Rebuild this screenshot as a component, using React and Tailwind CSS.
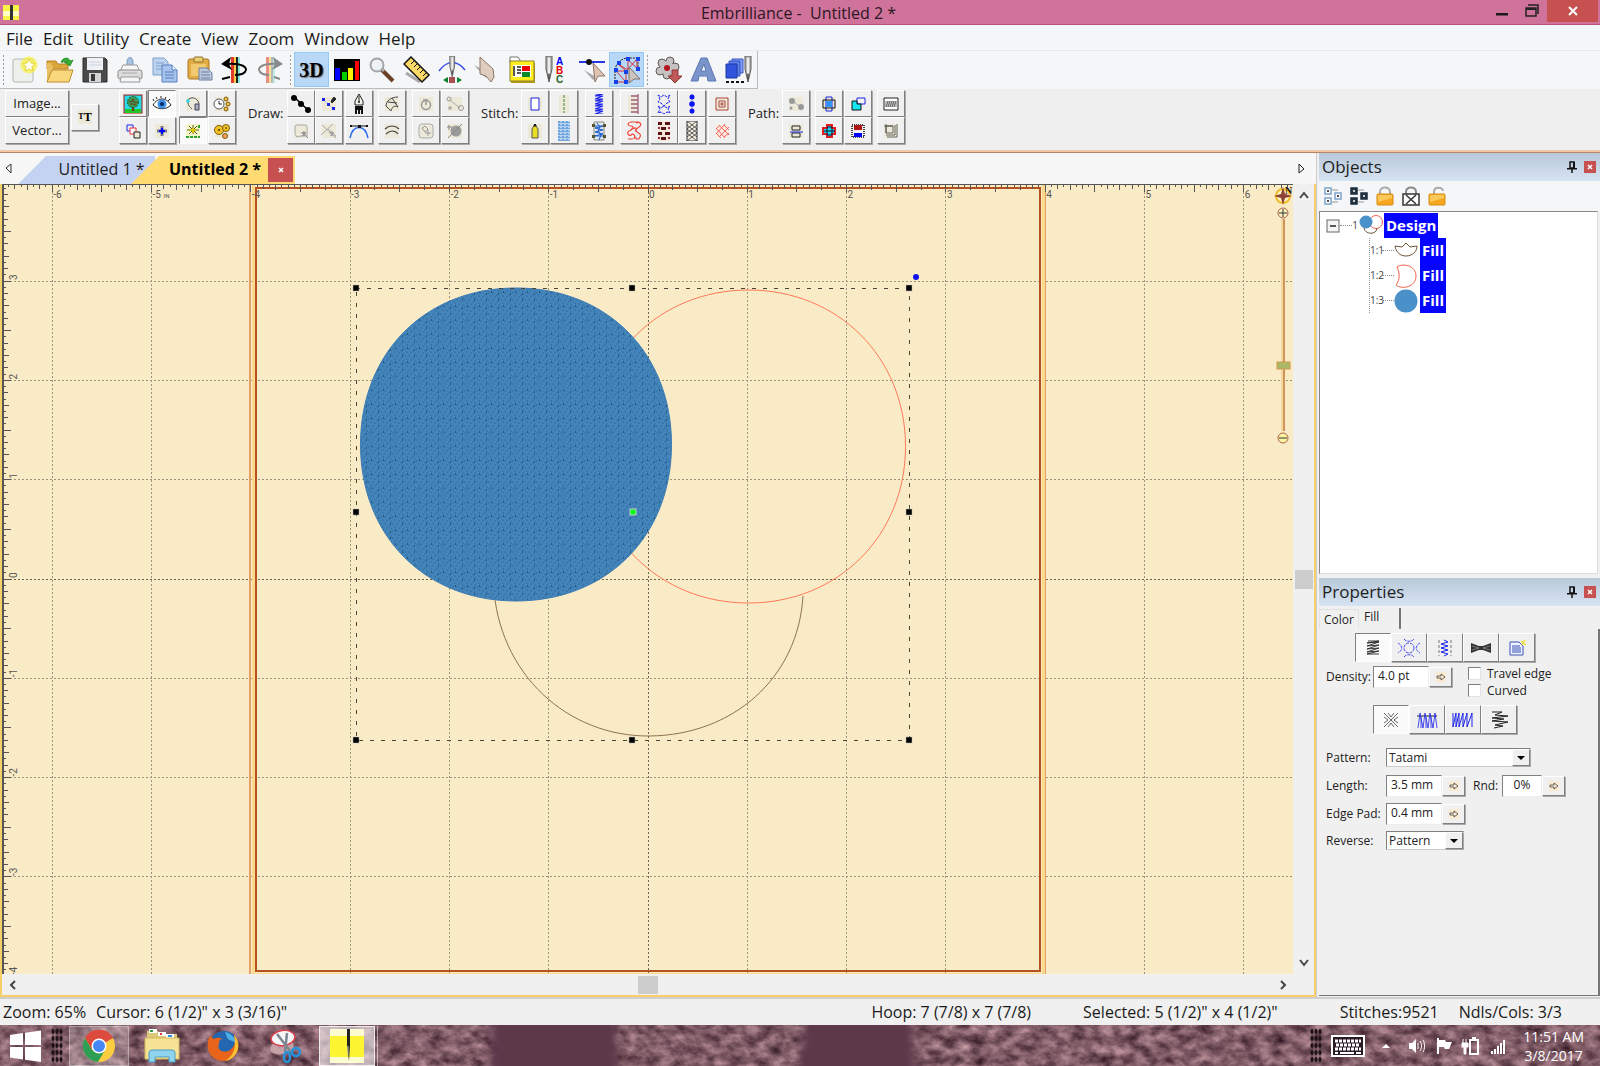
import { useState } from "react";

const INCH = 99.3;

const Ico = ({ s = 28, children, className = "" }) => (
    <svg width={s} height={s} viewBox={`0 0 ${s} ${s}`} fill="none" className={`shrink-0 ${className}`} aria-hidden="true">
        {children}
    </svg>
);

/* ---------- main toolbar icons, 28 x 28 ---------- */

const Thread = ({ faded }) => (
    <g opacity={faded ? 0.55 : 1}>
        <path d="M10 1h3v26h-3z" fill="#e23b2a" />
        <path d="M13 1h2v26h-2z" fill="#f5d04a" />
        <path d="M15 1h2v26h-2z" fill={faded ? "#888" : "#222"} />
        <path d="M17 1h2v26h-2z" fill="#8fe6dc" />
    </g>
);

const fileTools = [
    ["New", <Ico><rect x="2" y="3" width="20" height="23" rx="2" fill="#eef0ec" stroke="#b4b8b0" /><circle cx="18" cy="9" r="8.500" fill="#f7f04a" opacity=".75" /><path d="M18 3l2 4 4 .6-3 3 .8 4.400-3.800-2-3.800 2 .8-4.400-3-3 4-.6z" fill="#fffef0" stroke="#e3d63c" /></Ico>],
    ["Open", <Ico><path d="M1 5h9l2 3h10v5H1z" fill="#dba63c" stroke="#b98324" /><path d="M1 26V7h4l3 8z" fill="#eabf62" /><path d="M1 26l5-12h21l-4 12z" fill="#f9d77c" stroke="#c08a2c" /><path d="M15 6c2-5 8-5 9-1l3-1-3 6-6-4 3-.5c-1-1-3-1-4 1z" fill="#35ad35" stroke="#1d7f1d" strokeWidth=".7" /></Ico>],
    ["Save", <Ico><path d="M2 2h22l2 2v22H2z" fill="#4b4b4b" stroke="#2c2c2c" /><rect x="6" y="2" width="16" height="12" fill="#eef1f5" /><path d="M8 6h12M8 9h12" stroke="#cdd3da" /><rect x="8" y="17" width="12" height="9" fill="#d5d5d5" /><rect x="10" y="18" width="4" height="7" fill="#3a3a3a" /></Ico>],
    ["Print", <Ico><path d="M11 6c0-6 6-6 6 0v6h-6z" fill="#a8c2e2" stroke="#7d9cc4" /><path d="M7 9h14l3 7H4z" fill="#f6f6f6" stroke="#999" /><rect x="2" y="14" width="24" height="9" rx="2" fill="#dcdcdc" stroke="#8b8b8b" /><path d="M5 21h18l1 5H4z" fill="#f5f5f5" stroke="#999" /><path d="M6 17h15" stroke="#aaa" /></Ico>],
    ["Copy", <Ico><path d="M2 2h11l4 4v13H2z" fill="#bcd3ef" stroke="#7f9fcd" /><path d="M5 7h8M5 10h8M5 13h8" stroke="#7f9fcd" /><path d="M11 9h10l5 5v12H11z" fill="#a5c3ec" stroke="#587fbd" /><path d="M21 9v5h5" fill="#e4eefb" stroke="#587fbd" /><path d="M14 16h9M14 19h9M14 22h9" stroke="#587fbd" /></Ico>],
    ["Paste", <Ico><rect x="2" y="3" width="21" height="20" rx="2" fill="#e2ac45" stroke="#a9772a" /><rect x="8" y="1" width="9" height="5" rx="1" fill="#e9cf6f" stroke="#8a7130" /><path d="M5 8h15v12H5z" fill="#f2c96f" /><path d="M13 12h8l5 5v7H13z" fill="#bcc9dc" stroke="#6c7f9f" /><path d="M15 16h8M15 19h9M15 22h9" stroke="#6c7f9f" /></Ico>],
    ["Undo", <Ico><Thread /><path d="M6 8c14-1 22 3 18 8-2 2-5 3-10 3" stroke="#000" strokeWidth="2" /><path d="M0 8l10-7-2 7 3 6z" fill="#000" /><path d="M1 23l8-2" stroke="#000" strokeWidth="2" /></Ico>],
    ["Redo", <Ico><Thread faded /><path d="M22 8C8 7 0 11 4 16c2 2 5 3 9 3" stroke="#888" strokeWidth="2" /><path d="M27 8L17 1l2 7-3 6z" fill="#888" /><path d="M18 21l6 2" stroke="#888" strokeWidth="2" /></Ico>],
];

const Needle = ({ x = 14 }) => (
    <g transform={`translate(${x - 14} 0)`}>
        <path d="M11 0h6v13l-3 13-3-13z" fill="#b9bab8" stroke="#5a5a5a" />
        <path d="M14 2v15" stroke="#eee" strokeWidth="2" />
        <path d="M14 18v5" stroke="#222" />
    </g>
);

const viewTools = [
    ["3D", <span className="font-['Liberation_Serif',serif] text-[20px] font-bold text-black [text-shadow:1px_1px_1px_#777]">3D</span>],
    ["Color sort", <Ico><path d="M1 3h26v22H1z" fill="#000" /><path d="M2 12h5v12H2z" fill="#00f" /><path d="M9 16h5v8H9z" fill="#0c0" /><path d="M15 12h5v12h-5z" fill="#fe0" /><path d="M22 5h4v19h-4z" fill="#f00" /></Ico>],
    ["Magnify", <Ico><path d="M13 13l12 12" stroke="#6d4128" strokeWidth="4" /><path d="M13 12l3 3" stroke="#aaa" strokeWidth="3" /><circle cx="9" cy="9" r="6.500" fill="#eef2f4" stroke="#a3a6a8" strokeWidth="2" /></Ico>],
    ["Measure", <Ico><path d="M3 17l14 9" stroke="#aaa" strokeWidth="3" /><path d="M8 1l18 18-7 7L1 8z" fill="#fbd968" stroke="#111" strokeWidth="1.500" /><path d="M8 8l3-3M11 11l3-3M14 14l3-3M17 17l3-3M20 20l3-3" stroke="#111" /></Ico>],
    ["Stitch simulator", <Ico><path d="M1 15c8-11 18-11 26-1" stroke="#3a4fe0" strokeWidth="1.500" /><g transform="translate(3 0) scale(.8)"><Needle /></g><path d="M10 21l-5 3 5 3z" fill="#0a7f2e" /><path d="M19 21l5 3-5 3z" fill="#0a7f2e" /><path d="M12 21v6M14 21v6M16 21v6" stroke="#8a1717" strokeWidth="1.500" /></Ico>],
    ["Select", <Ico><path d="M1 9l12 13 3-5z" fill="#aaa" /><path d="M7 1v17l6 2 5 6 3-5-1-8z" fill="#dfcdbf" stroke="#8c7567" /></Ico>],
    ["Thread list", <Ico><path d="M3 7h24v20H3z" fill="#b59b1a" /><path d="M2 1h8l2 3v3H2z" fill="#fff" stroke="#777" /><rect x="2" y="5" width="24" height="20" fill="#ffee1c" stroke="#8b8030" /><rect x="5" y="9" width="18" height="12" fill="#fff" /><path d="M6 10v10M9 11h4M9 14h4M9 17h4" stroke="#222" strokeWidth="1.500" /><path d="M14 10h8v5h-8z" fill="#e00" /><path d="M14 16h8v5h-8z" fill="#0a8a2a" /></Ico>],
    ["Lettering", <Ico><Needle x={6} /><g className="font-['Liberation_Sans',sans-serif] text-[10px] font-bold"><text x="13" y="9" fill="#00f">A</text><text x="13" y="18" fill="#e00">B</text><text x="13" y="27" fill="#27641f">C</text></g></Ico>],
    ["Edit points", <Ico><path d="M6 14l9 10 3-3z" fill="#aaa" /><path d="M15 7l12 13-7 0-3 6z" fill="#dfc3b3" stroke="#8c7567" /><path d="M1 6h26" stroke="#2438e0" strokeWidth="2" /><circle cx="11" cy="6" r="3" fill="#111" /></Ico>],
    ["Edit stitches", <Ico><path d="M2 26V14C3 7 8 3 14 2h11v11" stroke="#222" strokeDasharray="2 1" /><path d="M3 26h10L3 15h10L5 8l10 6V4l9 8V3l-9 10M13 16v10" stroke="#c33" /><path d="M16 11l11 12-6 0-5 4z" fill="#cfc4bd" stroke="#7b6f69" /><g fill="#1540ee"><path d="M1 12h4v4H1zM1 24h4v4H1zM11 24h4v4h-4zM11 14h4v4h-4zM13 1h4v4h-4zM23 1h4v4h-4zM23 11h4v4h-4zM4 5h4v4H4z" /></g></Ico>],
];

const extraTools = [
    ["Import", <Ico><g fill="#c6c2c2" stroke="#5f5a5a"><circle cx="7" cy="7" r="4" /><circle cx="15" cy="5" r="4" /><circle cx="20" cy="11" r="4" /><circle cx="5" cy="15" r="4" /><circle cx="12" cy="19" r="4" /></g><circle cx="12" cy="12" r="7" fill="#c6c2c2" /><circle cx="12" cy="12" r="3" fill="#b3161c" /><path d="M17 14h6v6h4l-7 7-7-7h4z" fill="#c05a58" stroke="#8f3838" /></Ico>],
    ["Text", <Ico><path d="M1 25L11 2h6l9 23h-8l-1-5H9l-1 5zM11 15h5l-2-7z" fill="#7b95cc" stroke="#5c77b3" fillRule="evenodd" /></Ico>],
    ["Stitch out", <Ico><path d="M7 3h11v14H7z" fill="#7ea2f3" stroke="#3852c4" /><path d="M4 5h11v15H4z" fill="#5a7de8" stroke="#3852c4" /><path d="M1 8h11v14H1z" fill="#3154dd" stroke="#2038a0" /><g transform="translate(9 0)"><Needle /></g><path d="M1 26h19" stroke="#111" strokeWidth="2" strokeDasharray="3 2" /></Ico>],
];

/* ---------- drawing toolbar icons, 20 x 20 ---------- */

const Pad = () => <rect x="3" y="3" width="14" height="14" fill="#ece9d8" />;
const B = "#1a22e8";

const drawColumns = [
    {
        gap: "ml-5",
        items: [
            ["Background", <Ico s={20}><rect x="1" y="1" width="18" height="18" fill="#25d9e6" stroke="#a01515" /><path d="M2 15h16v4H2z" fill="#25c32a" /><path d="M9 10h2v7H9z" fill="#6a3c12" /><circle cx="10" cy="8" r="5.500" fill="#3b9a5a" stroke="#1d5b1a" strokeDasharray="2 1" /><path d="M6 7l3 1 1-3 2 4 3-1M7 10l3 0 3 1" stroke="#6a3c12" /></Ico>],
            ["Objects view", <Ico s={20}><path d="M4 4h6v6H4z" stroke={B} /><path d="M7 7h6v6H7z" fill="#fff" stroke="#e33" /><path d="M11 11h6v6h-6z" fill="#ece9d8" stroke="#222" /></Ico>],
        ],
    },
    {
        gap: "ml-px",
        items: [
            ["Show stitches", <Ico s={20}><path d="M1 11c5-8 13-8 18 0-5 5-13 5-18 0z" fill="#fff" stroke="#222" /><circle cx="10" cy="10" r="4.500" fill="#3f8fe6" /><circle cx="10" cy="10" r="2" fill="#062a66" /><path d="M2 7l-1-2M5 5L4 3M9 4V2M13 5l1-2M16 7l2-2" stroke="#222" /></Ico>, true],
            ["Center", <Ico s={20}><Pad /><path d="M10 5v10M5 10h10" stroke="#778" strokeWidth="3" /><path d="M10 7v6M7 10h6" stroke="#00f" strokeWidth="2" /></Ico>],
        ],
    },
    {
        gap: "ml-[3px]",
        items: [
            ["Node path", <Ico s={20}><Pad /><path d="M4 7c3-5 11-4 12 3M5 8c0 4 2 5 4 7" stroke="#555" /><circle cx="5" cy="7" r="1.800" fill="#25d9e6" /><path d="M12 10h4v6h-4z" fill="#aab" stroke="#446" /></Ico>],
            ["Grid snap", <Ico s={20}><path d="M3 3h14v14H3z" fill="#f4f8c8" /><path d="M10 4v9M4 9h12M6 5l8 8M14 5l-8 8" stroke="#5a5a18" /><path d="M10 7v5M7 9h6" stroke="#dcc60a" strokeWidth="2" /><path d="M3 16h14M16 4v3" stroke="#2aa52a" strokeWidth="2" strokeDasharray="3 1" /></Ico>, true],
        ],
    },
    {
        gap: "ml-px",
        items: [
            ["Clock", <Ico s={20}><Pad /><circle cx="7" cy="10" r="5" fill="#fff" stroke="#555" /><path d="M7 7v3h3" stroke="#222" /><g fill="#f1c33a" stroke="#7b5a10"><circle cx="14" cy="5" r="2" /><circle cx="16" cy="10" r="2" /><circle cx="14" cy="15" r="2" /></g></Ico>],
            ["Gears", <Ico s={20}><Pad /><g fill="#f2c322" stroke="#7b5a10"><circle cx="7" cy="9" r="4.500" /><circle cx="14" cy="7" r="3.500" /><circle cx="13" cy="15" r="2.500" fill="#f3a45a" /></g><circle cx="7" cy="9" r="1.300" fill="#7b5a10" /><circle cx="14" cy="7" r="1" fill="#7b5a10" /></Ico>],
        ],
    },
    { label: "Draw:", width: "w-[51px]" },
    {
        items: [
            ["Points", <Ico s={20}><path d="M3 3l14 13" stroke="#000" strokeWidth="1.500" /><g fill="#000"><circle cx="3" cy="4" r="3" /><circle cx="10" cy="10" r="3" /><circle cx="17" cy="16" r="3" /></g></Ico>],
            ["Wand area", <Ico s={20}><Pad /><path d="M6 4h8q2 0 2 2v9h-6l-4 1-2-3V6q0-2 2-2z" stroke="#aaa" /><path d="M11 11l6 6M11 15l4-3M10 12h5M13 10v5" stroke="#888" /></Ico>],
        ],
    },
    {
        items: [
            ["Pencil line", <Ico s={20}><Pad /><path d="M4 5l5 5 6 6" stroke="#b9b9e0" /><path d="M3 4h3v3H3zM8 9h3v3H8zM13 13h3v3h-3z" fill={B} /><path d="M12 7l3-4 2 2-4 4z" fill="#222" stroke="#222" /></Ico>],
            ["Wand cut", <Ico s={20}><Pad /><path d="M2 14L14 3M3 4l13 12M9 8l8 7" stroke="#aaa" /><path d="M11 11l6 6M11 15l4-3M10 12h5M13 10v5" stroke="#999" /></Ico>],
        ],
    },
    {
        gap: "ml-0.5",
        items: [
            ["Pen", <Ico s={20}><path d="M10 0l4 7v4H6V7z" fill="#f4f4ee" stroke="#222" /><path d="M10 2v6" stroke="#222" /><circle cx="10" cy="8" r="1" fill="#222" /><path d="M6 12h8v8h-2v-4h-1v4H9v-4H8v4H6z" fill="#111" /></Ico>],
            ["Curve", <Ico s={20}><path d="M2 5h16" stroke="#111" /><path d="M1 17C4 3 16 3 19 17" stroke="#2a6cf0" strokeWidth="1.500" /><path d="M1 4h2v2H1zM9 4h3v3H9zM17 4h2v2h-2z" fill="#111" /></Ico>],
        ],
    },
    {
        gap: "ml-[5px]",
        items: [
            ["Satin column", <Ico s={20}><Pad /><path d="M16 3C9 3 4 7 4 12M16 13c-4-2-6 0-7 4M10 4l6 9M6 8l9 1M4 12l5 5" stroke="#444" /></Ico>],
            ["Satin arc", <Ico s={20}><Pad /><path d="M3 8c4-4 10-4 14 0M4 13c4-4 9-4 12 0" stroke="#444" strokeWidth="1.200" /></Ico>],
        ],
    },
    {
        gap: "ml-1.5",
        items: [
            ["Apple", <Ico s={20}><Pad /><circle cx="10" cy="11" r="4.500" stroke="#999" strokeWidth="1.500" /><path d="M10 11V5M7 6h5" stroke="#999" strokeWidth="1.500" /></Ico>],
            ["Tag", <Ico s={20}><Pad /><rect x="3" y="3" width="14" height="14" rx="3" stroke="#aaa" /><path d="M6 7l3-2 3 3-3 3zM12 9v6M9 12h6" stroke="#999" /></Ico>],
        ],
    },
    {
        gap: "ml-px",
        items: [
            ["Join", <Ico s={20}><Pad /><path d="M5 6l10 8" stroke="#aaa" /><circle cx="4" cy="5" r="2" stroke="#999" /><circle cx="16" cy="14" r="2.500" stroke="#999" /><path d="M5 12v4M3 14h4" stroke="#999" /></Ico>],
            ["Remove overlap", <Ico s={20}><Pad /><circle cx="11" cy="10" r="5.500" fill="#9a9a9a" /><path d="M3 17L17 3M4 4v5M2 6h5" stroke="#888" /></Ico>],
        ],
    },
    { label: "Stitch:", width: "w-[52px]" },
    {
        items: [
            ["Outline", <Ico s={20}><Pad /><path d="M6 4h8v12H6z" fill="#fff" stroke={B} /></Ico>],
            ["Pencil", <Ico s={20}><Pad /><path d="M7 8l3-5 3 5v9H7z" fill="#e9de26" stroke="#555" /><path d="M9 5l1-2 1 2z" fill="#111" stroke="#111" /></Ico>],
        ],
    },
    {
        gap: "ml-px",
        items: [
            ["Run", <Ico s={20}><path d="M5 1h10v18H5z" fill="#ece9d8" /><path d="M10 1v18" stroke="#3f8a3a" strokeDasharray="3 1" /></Ico>],
            ["Light fill", <Ico s={20}><path d="M4 0h12v20H4z" fill="#b5d3f0" /><path d="M5 0v20M9 0v20M13 0v20" stroke="#3f83cf" strokeWidth="1.200" strokeDasharray="2 1" /><path d="M7 1v19M11 1v19M15 1v19" stroke="#3f83cf" strokeDasharray="1 2" /></Ico>],
        ],
    },
    {
        gap: "ml-[7px]",
        items: [
            ["Zigzag", <Ico s={20}><path d="M6 0h8L6 2h8L6 5h8L6 7h8l-8 3h8l-8 2h8l-8 3h8l-8 2h8l-8 3h8" stroke={B} strokeWidth="1.200" /></Ico>],
            ["Satin border", <Ico s={20}><path d="M5 1h10v18H5z" fill="#dfe9f4" stroke="#8a8a7a" /><path d="M5 5h10L6 7l8 2-8 2 8 2-9 2h10M8 2l3 4-2 4 3 4-2 5" stroke="#1858c8" /><path d="M3 3h3v3H3zM14 3h3v3h-3zM3 14h3v3H3zM14 14h3v3h-3z" fill="#55532a" /></Ico>],
        ],
    },
    {
        gap: "ml-[7px]",
        items: [
            ["E stitch", <Ico s={20}><path d="M4 1h10v18H4z" fill="#ece9d8" /><path d="M14 0v20M7 2h7M7 6h7M7 10h7M7 14h7M7 18h7" stroke="#a0607a" strokeWidth="1.300" /></Ico>],
            ["Stipple", <Ico s={20}><path d="M8 1c-5 0-5 4-1 4s1 4-2 5 0 6 2 4 5 0 3 4M12 2c5-2 6 2 3 4s-5 3-2 5 4 2 3 5-5 3-4 0M9 8c3-2 4-1 3 2M6 1h9M4 18h5" stroke="#f0483c" strokeWidth="1.200" /></Ico>],
        ],
    },
    {
        gap: "ml-0.5",
        items: [
            ["Motif", <Ico s={20}><path d="M4 1l3 2 3-2 3 2 3-2-2 4 2 3-3 1-3 3-3-3-3-1 2-3zM4 12l3 2 3-2 3 2 3-2-2 3 2 4-3-1-3 2-3-2-3 1 2-4z" stroke={B} strokeDasharray="3 1" /></Ico>],
            ["Motif fill", <Ico s={20}><path d="M4 0h12v20H4z" fill="#f4e8dc" /><path d="M4 1h4v3H4zM11 1h5v3h-5zM7 6h5v3H7zM4 11h4v3H4zM11 11h5v3h-5zM7 16h5v3H7z" fill="#5b1414" /><path d="M4 6h2v2H4zM14 6h2v2h-2zM4 16h2v2H4zM14 16h2v2h-2z" fill="#a02b2b" /></Ico>],
        ],
    },
    {
        items: [
            ["Beads", <Ico s={20}><path d="M10 0v20" stroke="#99a" /><g fill="#0a14f0"><circle cx="10" cy="3" r="2.500" /><circle cx="10" cy="10" r="2.800" /><circle cx="10" cy="17" r="2.500" /></g></Ico>],
            ["Net fill", <Ico s={20}><path d="M5 0h10v20H5z" fill="#f0eddf" stroke="#333" /><path d="M5 0l10 8M5 4l10 8M5 8l10 8M5 12l10 8M15 0L5 8M15 4L5 12M15 8L5 16M15 12L5 20" stroke="#333" strokeWidth=".8" /></Ico>],
        ],
    },
    {
        gap: "ml-0.5",
        items: [
            ["Spiral", <Ico s={20}><Pad /><path d="M4 4h12v12H4zM7 7h6v6H7zM9 9h2v2H9z" stroke="#b04a40" /></Ico>],
            ["Cross stitch", <Ico s={20}><path d="M4 4h12v12H4z" fill="#fbe9e2" /><path d="M4 7l9 10M4 12l5 5M7 4l10 10M12 4l5 5M4 13l9-10M7 16L17 6M12 16l5-4M4 8l4-4" stroke="#f0483c" strokeWidth=".8" /></Ico>],
        ],
    },
    { label: "Path:", width: "w-[46px]" },
    {
        items: [
            ["Dots", <Ico s={20}><Pad /><path d="M5 6l11 8" stroke="#aaa" /><g fill="#999"><circle cx="6" cy="7" r="3" /><circle cx="15" cy="13" r="3" /><circle cx="5" cy="14" r="1.500" /></g></Ico>],
            ["Split", <Ico s={20}><Pad /><path d="M6 5h8v4H6zM6 12h8v4H6z" stroke="#222" /><path d="M4 11h13" stroke={B} /></Ico>],
        ],
    },
    {
        gap: "ml-[5px]",
        items: [
            ["Intersect", <Ico s={20}><Pad /><path d="M7 3h6v14H7z" stroke={B} /><path d="M4 6h12v8H4z" stroke="#111" /><path d="M7 7h6v6H7z" fill="#3592f7" /></Ico>],
            ["Union", <Ico s={20}><path d="M8 4h5v3h3v6h-3v3H8v-3H4V7h4z" fill="#14dbe8" stroke="#e02020" strokeWidth="2" /><path d="M8 6h5v8H8zM5 10h11" stroke="#114" /></Ico>],
        ],
    },
    {
        gap: "ml-px",
        items: [
            ["Subtract", <Ico s={20}><path d="M9 4h8v6H9z" fill="#f3f3f3" stroke={B} /><path d="M4 7h5v3h4v6H4z" fill="#14e8ee" stroke="#111" /></Ico>],
            ["Align", <Ico s={20}><path d="M4 4h12v12H4z" stroke="#444" strokeWidth="2" strokeDasharray="1 1" /><path d="M6 4h8v5H6z" fill="#b01616" /><path d="M6 12h8v4H6z" fill="#00f" /></Ico>],
        ],
    },
    {
        gap: "ml-[5px]",
        items: [
            ["Columns", <Ico s={20}><path d="M3 4h14v12H3z" fill="#fff" stroke="#222" /><path d="M5 7v6l2-6v6l2-6v6l2-6v6l2-6v6l2-6v6" stroke="#555" strokeWidth=".8" /></Ico>],
            ["Offset", <Ico s={20}><Pad /><path d="M5 5h7v7H5zM5 3v9M3 5h9M14 4v10H5M16 3v13H6" stroke="#444" strokeWidth=".8" /></Ico>],
        ],
    },
];

const raised = "bg-[#f0f0f0] border border-t-white border-l-white border-r-[#808080] border-b-[#808080] shadow-[1px_1px_0_#a9a9a9]";
const sunken = "bg-[#fafafa] border border-t-[#808080] border-l-[#808080] border-r-white border-b-white";

const Bevel = ({ label, on, className = "", children }) => (
    <button type="button" aria-label={label} className={`flex items-center justify-center ${on ? sunken : raised} ${className}`}>
        {children}
    </button>
);

const TitleBar = () => (
    <header className="flex h-[25px] shrink-0 items-center border-b border-[#b8527f] bg-[#d0739b] pl-0.5">
        <Ico s={18}><path d="M1 2h16v15H1z" fill="#fbf24a" /><path d="M1 8h16v5H1z" fill="#fffdc0" /><path d="M8 2h3v15H8z" fill="#333" /></Ico>
        <h1 className="ml-[90px] flex-1 whitespace-pre pt-0.5 text-center text-base text-[#2b1722]">{"Embrilliance -  Untitled 2 *"}</h1>
        <div className="flex h-full items-start">
            <button type="button" aria-label="Minimize" className="flex h-[22px] w-[30px] items-center justify-center">
                <Ico s={14}><path d="M1 9h12v2.500H1z" fill="#1a1a1a" /></Ico>
            </button>
            <button type="button" aria-label="Restore" className="flex h-[22px] w-[30px] items-center justify-center">
                <Ico s={14}><path d="M3 1h10v9" stroke="#222" strokeWidth="1.500" /><path d="M1 4h10v8H1z" stroke="#222" strokeWidth="1.500" /><path d="M1 4h10v2H1z" fill="#222" /></Ico>
            </button>
            <button type="button" aria-label="Close" className="mr-0.5 flex h-[22px] w-[51px] items-center justify-center bg-[#c75050]">
                <Ico s={12}><path d="M2 2l8 8M10 2l-8 8" stroke="#fff" strokeWidth="2" /></Ico>
            </button>
        </div>
    </header>
);

const menus = ["File", "Edit", "Utility", "Create", "View", "Zoom", "Window", "Help"];

const MenuBar = () => (
    <nav className="flex h-[26px] shrink-0 items-center gap-2.5 border-b border-[#e8e9eb] bg-[#f5f6f8] pt-0.5 pl-1.5 text-[17px] text-[#1a1a1a]">
        {menus.map((m) => (
            <button key={m} type="button">{m}</button>
        ))}
    </nav>
);

const Grip = () => <div className="mx-0.5 h-8 w-[3px] bg-[radial-gradient(#999_1px,transparent_1px)] bg-size-[3px_4px]" />;

const ToolGroup = ({ tools, active = [] }) =>
    tools.map(([label, icon]) => (
        <button
            key={label}
            type="button"
            aria-label={label}
            className={`flex h-[35px] w-[35px] items-center justify-center border ${active.includes(label) ? "border-[#90c8f6] bg-[#b9d7f6]" : "border-transparent"}`}
        >
            {icon}
        </button>
    ));

const MainToolbar = () => (
    <div className="flex h-[38px] shrink-0 bg-[#f5f6f8]">
        <div className="flex items-center border-r border-b border-[#bcbcbc] pr-px">
            <Grip />
            <ToolGroup tools={fileTools} />
            <Grip />
            <ToolGroup tools={viewTools} active={["3D", "Edit stitches"]} />
            <Grip />
            <ToolGroup tools={extraTools} />
        </div>
    </div>
);

const DrawToolbar = () => (
    <div className="flex h-[61px] shrink-0 items-start bg-[#efefef] pt-px pl-[5px] text-[13px] text-[#222]">
        <div className="flex flex-col">
            <button type="button" className={`h-[27px] w-16 ${raised}`}>Image...</button>
            <button type="button" className={`h-[27px] w-16 ${raised}`}>Vector...</button>
        </div>
        <div className="flex h-[54px] items-center">
            <Bevel label="Text" className="ml-0.5 h-[27px] w-7">
                <span className="flex h-3.5 w-3.5 items-center justify-center bg-[#ece9d8] font-['Liberation_Serif',serif] font-bold text-black">
                    <span className="text-[8px]">T</span>
                    <span className="text-[12px]">T</span>
                </span>
            </Bevel>
        </div>
        {drawColumns.map((col, i) =>
            col.label ? (
                <div key={i} className={`flex h-12 shrink-0 items-center pl-3 ${col.width}`}>{col.label}</div>
            ) : (
                <div key={i} className={`flex flex-col ${col.gap ?? ""}`}>
                    {col.items.map(([label, icon, on]) => (
                        <Bevel key={label} label={label} on={on} className="h-[27px] w-7">{icon}</Bevel>
                    ))}
                </div>
            )
        )}
    </div>
);

const TabStrip = () => (
    <div className="flex h-[31px] shrink-0 items-end bg-[#f7f7f7] text-base text-[#222]">
        <button type="button" aria-label="Scroll tabs left" className="flex h-full w-[18px] items-center justify-center">
            <Ico s={12}><path d="M8 1v9L3 5z" stroke="#333" /></Ico>
        </button>
        <button type="button" className="h-7 w-[137px] bg-[#c5d3f3] pb-0.5 pl-[30px] [clip-path:polygon(28px_0,100%_0,100%_100%,0_100%)]">Untitled 1 *</button>
        <div className="-ml-6 flex h-7 w-[164px] items-center bg-[#ffdb72] pl-[38px] [clip-path:polygon(28px_0,100%_0,100%_100%,0_100%)]">
            <button type="button" className="whitespace-nowrap pb-0.5 font-bold text-black">Untitled 2 *</button>
            <button type="button" aria-label="Close tab" className="mr-0.5 ml-auto flex h-6 w-[25px] items-center justify-center bg-[#c75050]">
                <Ico s={6}><path d="M1 1l4 4M5 1L1 5" stroke="#fff" strokeWidth="1.500" /></Ico>
            </button>
        </div>
        <button type="button" aria-label="Scroll tabs right" className="mr-2 ml-auto flex h-full w-3 items-center justify-center">
            <Ico s={12}><path d="M3 1v9l5-4z" stroke="#222" /></Ico>
        </button>
    </div>
);

/* ---------- design canvas, coordinates relative to the ruler origin ---------- */

const blob = (cx, cy, rx, ry, k) => {
    const a = rx * k;
    const b = ry * k;
    return `M${cx} ${cy - ry}C${cx + a} ${cy - ry} ${cx + rx} ${cy - b} ${cx + rx} ${cy}S${cx + a} ${cy + ry} ${cx} ${cy + ry}S${cx - rx} ${cy + b} ${cx - rx} ${cy}S${cx - a} ${cy - ry} ${cx} ${cy - ry}z`;
};

const range = (a, b) => Array.from({ length: b - a + 1 }, (_, i) => a + i);

const tickSize = (n) => {
    if (n % 8 === 0) return 7;
    if (n % 4 === 0) return 5;
    if (n % 2 === 0) return 4;
    return 2;
};

const handles = [[-292, -291], [-16, -291], [261, -291], [-292, -67], [261, -67], [-292, 161], [-16, 161], [261, 161]];

const Canvas = () => (
    <svg className="block h-full w-full bg-[#faebc7]" role="img" aria-label="Design canvas">
        <defs>
            <pattern id="tatami" width="12" height="14" patternUnits="userSpaceOnUse">
                <rect width="12" height="14" fill="#4384bb" />
                <path d="M0 1h2M4 3h2M8 1h2M10 4h2M2 5h2M6 6h2M0 8h2M4 10h2M8 8h2M10 11h2M2 12h2M6 13h2" stroke="#336d9f" />
                <path d="M6 1h1M11 7h1M6 9h1" stroke="#17466f" strokeWidth="1.500" />
            </pattern>
        </defs>
        <g transform="translate(646 395)" shapeRendering="crispEdges" fill="none">
            <g stroke="#9a937e" strokeDasharray="2 2">
                {range(-6, 6).map((n) => (
                    <path key={n} d={`M${n * INCH} -395V700`} stroke={n === 0 ? "#6a6454" : undefined} />
                ))}
                {range(-3, 4).map((n) => (
                    <path key={n} d={`M-646 ${n * INCH}H1600`} stroke={n === 0 ? "#6a6454" : undefined} />
                ))}
            </g>
            <path d="M-398 -395V700M397 -395V700" stroke="#dfa06c" strokeWidth="2" />
            <path d="M-395 -395V395H395V-395" stroke="#fbd98a" strokeWidth="3" />
            <rect x="-392" y="-391" width="784" height="783" stroke="#b4511e" strokeWidth="2" />
            <path d="M-646 -395H1600M-645 -395V700" stroke="#555" strokeWidth="2" />
            <g stroke="#555">
                {range(-103, 104).map((n) => (
                    <path key={n} d={`M${(n * INCH) / 16} -395v${tickSize(n) + 1}`} />
                ))}
                {range(-63, 64).map((n) => (
                    <path key={n} d={`M-645 ${(n * INCH) / 16}h${tickSize(n) + 1}`} />
                ))}
            </g>
        </g>
        <g transform="translate(646 395)" className="font-['Roboto',sans-serif] text-[10px]" fill="#555">
            {range(-6, 6).map((n) => (
                <text key={n} x={n * INCH + 1} y="-381">{n}</text>
            ))}
            <text x={-5 * INCH + 12} y="-381" className="text-[6px]">IN</text>
            {range(-3, 4).map((n) => (
                <text key={n} transform={`translate(-631 ${n * INCH - 1}) rotate(-90)`}>{-n}</text>
            ))}
        </g>
        <g transform="translate(646 395)" fill="none">
            <path d={blob(100.5, -132.5, 157, 156.5, 0.57)} stroke="#ff7a58" />
            <path d="M-154.500 5C-150 95 -80 158 2 157S150 100 155 17" stroke="#8c7350" />
            <path d={blob(-132, -134.5, 155.5, 156.5, 0.585)} fill="url(#tatami)" stroke="#3c7cb4" />
            <rect x="-292" y="-291" width="553" height="452" stroke="#4b4638" strokeDasharray="4 7" shapeRendering="crispEdges" />
            {handles.map(([x, y]) => (
                <rect key={`${x},${y}`} x={x - 3} y={y - 3} width="6" height="6" fill="#000" stroke="#bbb" strokeWidth=".5" />
            ))}
            <rect x="-18" y="-70" width="6" height="6" fill="#00ff1a" stroke="#ccc" />
            <circle cx="268" cy="-302" r="3" fill="#1212ee" />
        </g>
    </svg>
);

const ZoomSlider = () => (
    <svg className="absolute top-0 right-0 overflow-visible" width="20" height="264" viewBox="0 0 20 264" fill="none" role="img" aria-label="Zoom">
        <circle cx="10" cy="12" r="7" fill="#fdf3c8" stroke="#edbd28" strokeWidth="2" />
        <path d="M10 3l2 7 7 2-7 2-2 7-2-7-7-2 7-2z" fill="#8c4237" />
        <text x="12" y="10" className="font-['Liberation_Serif',serif] text-[10px] font-bold" fill="#111">N</text>
        <path d="M9 35v212" stroke="#f3d6a0" strokeWidth="2" />
        <path d="M11 35v212" stroke="#d0935a" strokeWidth="2" />
        <circle cx="10" cy="29" r="5" fill="#faf3c0" stroke="#b06048" />
        <path d="M10 25v8M6 29h8" stroke="#333" />
        <rect x="4" y="178" width="13" height="7" fill="#a9b966" stroke="#d09a52" />
        <circle cx="10" cy="254" r="5" fill="#faf3a0" stroke="#b06048" />
        <path d="M6 254h8" stroke="#333" />
    </svg>
);

const Workspace = () => (
    <section className="flex min-w-0 flex-1 flex-col border-r border-[#ccc]">
        <TabStrip />
        <div className="flex min-h-0 flex-1 flex-col border-2 border-t-0 border-[#f6cf6a]">
            <div className="flex min-h-0 flex-1">
                <div className="relative min-w-0 flex-1">
                    <Canvas />
                    <ZoomSlider />
                </div>
                <div className="flex w-[21px] shrink-0 flex-col items-center justify-between bg-[#f0f0f0] py-1">
                    <Ico s={14}><path d="M3 10l4-5 4 5" stroke="#444" strokeWidth="2" /></Ico>
                    <div className="mt-[368px] mb-auto h-[19px] w-[18px] bg-[#cdcdcd]" />
                    <Ico s={14}><path d="M3 4l4 5 4-5" stroke="#444" strokeWidth="2" /></Ico>
                </div>
            </div>
            <div className="flex h-[21px] shrink-0 items-center bg-[#f0f0f0] pr-6 pl-1">
                <Ico s={14}><path d="M9 3L5 7l4 4" stroke="#444" strokeWidth="2" /></Ico>
                <div className="mx-auto h-[18px] w-5 bg-[#cdcdcd]" />
                <Ico s={14}><path d="M5 3l4 4-4 4" stroke="#444" strokeWidth="2" /></Ico>
            </div>
        </div>
    </section>
);

/* ---------- right side ---------- */

const PanelHeader = ({ title }) => (
    <div className="flex h-7 shrink-0 items-center bg-linear-to-b from-[#b9c9d9] to-[#d6e3f2] pr-1 pl-[3px]">
        <h2 className="flex-1 text-[17px] text-[#1e1e1e]">{title}</h2>
        <button type="button" aria-label={`Pin ${title}`} className="mr-1.5">
            <Ico s={12}><path d="M4 1h4v6H4z" stroke="#111" strokeWidth="1.500" /><path d="M7 1h2v6H7zM1 7h10v1.500H1z" fill="#111" /><path d="M6 8v4" stroke="#111" strokeWidth="1.500" /></Ico>
        </button>
        <button type="button" aria-label={`Close ${title}`} className="flex h-3 w-3 items-center justify-center bg-[#c75050]">
            <Ico s={6}><path d="M1 1l4 4M5 1L1 5" stroke="#fff" strokeWidth="1.500" /></Ico>
        </button>
    </div>
);

const NodeIcon = ({ c, f }) => (
    <Ico s={20}>
        <path d="M9 4h6M9 16h6" stroke="#999" />
        <rect x="2" y="2" width="6" height="6" fill={f} stroke={c} strokeWidth="1.500" />
        <rect x="2" y="12" width="6" height="6" fill={f} stroke={c} strokeWidth="1.500" />
        <rect x="12" y="7" width="6" height="6" fill={f} stroke={c} strokeWidth="1.500" />
        <path d="M4 5h2M5 4v2M4 15h2M5 14v2M14 10h2M15 9v2" stroke={f === "#fff" ? "#111" : "#fff"} />
    </Ico>
);

const objectTools = [
    ["Expand nodes", <NodeIcon c="#7fa3c9" f="#fff" />],
    ["Collapse nodes", <NodeIcon c="#1d2c3c" f="#26343f" />],
    ["Lock", <Ico s={20}><path d="M5 10V6c0-6 10-6 10 0v4" stroke="#aaa" strokeWidth="2" /><rect x="2" y="8" width="16" height="11" rx="1" fill="#f5a81f" stroke="#d98a14" /><path d="M3 9h14v3L3 16z" fill="#fbc85a" /></Ico>],
    ["Clear lock", <Ico s={20}><path d="M5 9V6c0-6 10-6 10 0v3" stroke="#888" strokeWidth="2" /><rect x="2" y="8" width="16" height="11" fill="#fff" stroke="#333" strokeWidth="1.500" /><path d="M5 9l10 9M15 9L5 18" stroke="#333" strokeWidth="1.500" /></Ico>],
    ["Unlock", <Ico s={20}><path d="M7 9V6c0-6 9-5 9-1" stroke="#aaa" strokeWidth="2" /><rect x="2" y="8" width="16" height="11" rx="1" fill="#f5a81f" stroke="#d98a14" /><path d="M3 9h14v3L3 16z" fill="#fbc85a" /></Ico>],
];

const fills = [
    ["1:1", <Ico s={24}><path d="M1 7l7 1 4-4 4 4 7-1c0 6-5 10-11 10S2 13 1 7z" stroke="#6d5438" /></Ico>],
    ["1:2", <Ico s={24}><path d="M3 3c5-4 19-2 19 9S8 26 2 21c4-5 4-12 1-18z" stroke="#f0604c" /></Ico>],
    ["1:3", <Ico s={24}><path d={blob(12, 12, 11.5, 11.5, 0.58)} fill="#4a91ca" /></Ico>],
];

const ObjectsPanel = () => (
    <section className="flex min-h-0 flex-1 flex-col">
        <PanelHeader title="Objects" />
        <div className="flex h-[30px] shrink-0 items-center gap-1.5 bg-[#f5f6f8] pl-1">
            {objectTools.map(([label, icon]) => (
                <button key={label} type="button" aria-label={label}>{icon}</button>
            ))}
        </div>
        <ul className="mr-0.5 min-h-0 flex-1 border border-t-[#888] border-r-[#ddd] border-b-[#ddd] border-l-[#888] bg-white pt-px pl-1.5 text-[15px] font-bold text-white">
            <li>
                <div className="flex h-[25px] items-center">
                    <Ico s={14}><rect x="1" y="1" width="12" height="12" fill="#f5f5f5" stroke="#666" /><path d="M4 7h6" stroke="#222" strokeWidth="1.500" /></Ico>
                    <span className="w-3 border-t border-dotted border-[#888]" />
                    <span className="w-1.5 text-center text-[10px] font-normal text-[#444]">1</span>
                    <Ico s={26}><circle cx="18" cy="9" r="6.500" stroke="#f0604c" /><path d="M6 15c1 7 13 7 13 0" stroke="#6d5438" /><circle cx="8" cy="9" r="6.500" fill="#4a91ca" /></Ico>
                    <span className="flex h-[25px] items-center bg-[#0505ff] px-0.5">Design</span>
                </div>
                <ul className="ml-[43px] border-l border-dotted border-[#999]">
                    {fills.map(([id, icon]) => (
                        <li key={id} className="flex h-[25px] items-center">
                            <span className="w-3 text-[10px] font-normal text-[#444]">{id}</span>
                            <span className="w-3 border-t border-dotted border-[#888]" />
                            {icon}
                            <span className="ml-0.5 flex h-[25px] items-center bg-[#0505ff] px-0.5">Fill</span>
                        </li>
                    ))}
                </ul>
            </li>
        </ul>
    </section>
);

const fillTypes = [
    ["Standard", <Ico s={20}><path d="M5 3h11L4 5l12-1L4 8l12-1L4 11l12-1L4 14l12-1L4 16l12 0" stroke="#222" strokeWidth=".9" /></Ico>],
    ["Radial", <Ico s={24}><circle cx="12" cy="12" r="5" stroke={B} strokeDasharray="3 1" strokeWidth=".8" /><path d="M1 7c5 3 5 7 0 10M23 7c-5 3-5 7 0 10M7 3c2 3 8 3 10 0M7 21c2-3 8-3 10 0" stroke={B} strokeDasharray="3 1" strokeWidth=".8" /></Ico>],
    ["Column", <Ico s={20}><path d="M4 2v16M16 2v16" stroke="#555" strokeDasharray="3 2" strokeWidth=".8" /><path d="M9 2l4 2-7 2 7 2-7 2 7 2-7 2 7 2-4 2" stroke={B} /></Ico>],
    ["Bow", <Ico s={20}><path d="M0 5l8 3h4l8-3v10l-8-3H8l-8 3z" fill="#333" /><path d="M1 8l7 2-7 2M19 8l-7 2 7 2" stroke="#999" strokeWidth=".7" /></Ico>],
    ["Notes", <Ico s={20}><path d="M3 4h9l4 4v9H3z" fill="#eef1ff" stroke="#3b50b5" /><path d="M5 8h8M5 10h9M5 12h9M5 14h9" stroke="#3b50b5" /><path d="M14 3l5 4M18 2l-3 5" stroke="#f0e24a" strokeWidth="1.500" /></Ico>],
];

const underlays = [
    ["No underlay", <Ico s={20}><path d="M3 3l14 14M17 3L3 17M3 7l4 3-4 3M17 7l-4 3 4 3M7 3l3 4 3-4M7 17l3-4 3 4" stroke="#444" strokeWidth=".8" /></Ico>],
    ["Light underlay", <Ico s={22}><path d="M1 7h20" stroke="#223" /><path d="M2 19L4 4l3 15L9 4l3 15 2-15 3 15 2-15 2 15M5 19V8M10 19V8M15 19V8" stroke={B} strokeWidth=".8" /></Ico>],
    ["Dense underlay", <Ico s={22}><path d="M1 4v14L4 4v14L7 4v14l4-14 0 14 4-14 0 14 5-14v14" stroke={B} /></Ico>],
    ["Edge underlay", <Ico s={22}><path d="M4 3h10L7 6l13 1-16 2 12 1-12 2 16 1-13 3 8 1-9 2" stroke="#222" /></Ico>],
];

const IconRow = ({ items }) => {
    const [picked, setPicked] = useState(0);
    return items.map(([label, icon], i) => (
        <button
            key={label}
            type="button"
            aria-label={label}
            onClick={() => setPicked(i)}
            className={`flex h-[29px] w-9 shrink-0 items-center justify-center ${picked === i ? sunken : raised}`}
        >
            {icon}
        </button>
    ));
};

const ValueField = ({ id, label, value, labelWidth, inputWidth = "w-14" }) => (
    <>
        <label htmlFor={id} className={`shrink-0 ${labelWidth}`}>{label}</label>
        <input id={id} defaultValue={value} className={`h-[22px] border border-t-[#808080] border-r-[#eee] border-b-[#eee] border-l-[#808080] bg-white px-1 pb-1 ${inputWidth}`} />
        <Bevel label={`Adjust ${label}`} className="h-5 w-[23px]">
            <Ico s={12}><path d="M1 1h10v10H1z" fill="#fbead2" /><path d="M2 5h4V3l4 3-4 3V7H2z" stroke="#444" strokeWidth=".8" /></Ico>
        </Bevel>
    </>
);

const DropDown = ({ id, label, width, options }) => (
    <>
        <label htmlFor={id} className="w-[60px] shrink-0">{label}</label>
        <div className={`relative ${width}`}>
            <select id={id} className="h-[19px] w-full appearance-none border border-t-[#808080] border-r-[#ccc] border-b-[#ccc] border-l-[#808080] bg-white px-0.5 leading-none">
                {options.map((o) => (
                    <option key={o}>{o}</option>
                ))}
            </select>
            <span className={`pointer-events-none absolute top-px right-px flex h-[17px] w-[18px] items-center justify-center ${raised}`}>
                <Ico s={8}><path d="M0 2h8L4 6z" fill="#000" /></Ico>
            </span>
        </div>
    </>
);

const CheckBox = ({ label }) => (
    <label className="flex h-[17px] items-center gap-1.5">
        <input type="checkbox" className="h-[13px] w-[13px] appearance-none border border-t-[#808080] border-r-[#e3e3e3] border-b-[#e3e3e3] border-l-[#808080] bg-white checked:bg-[#333]" />
        {label}
    </label>
);

const PropertiesPanel = () => (
    <section className="flex h-[419px] shrink-0 flex-col bg-[#f0f0f0] pb-px text-[12px] text-[#222]">
        <PanelHeader title="Properties" />
        <div className="flex h-[23px] items-start pt-0.5">
            <button type="button" className="mt-px h-5 w-10 border border-b-0 border-[#e2e2e2]">Color</button>
            <button type="button" className="flex h-[21px] w-[42px] border-r-2 border-[#777] pl-[5px]">Fill</button>
        </div>
        <div className="flex flex-1 flex-col border-r-2 border-b border-[#777] pt-1 pl-[7px]">
            <div className="flex pl-[29px]"><IconRow items={fillTypes} /></div>
            <div className="mt-1 flex h-9 items-start">
                <div className="flex items-center">
                    <ValueField id="density" label="Density:" value="4.0 pt" labelWidth="w-[47px]" />
                </div>
                <div className="-mt-px ml-4 flex flex-col">
                    <CheckBox label="Travel edge" />
                    <CheckBox label="Curved" />
                </div>
            </div>
            <div className="mt-[3px] flex pl-[47px]"><IconRow items={underlays} /></div>
            <div className="mt-[14px] flex items-center">
                <DropDown id="pattern" label="Pattern:" width="w-[145px]" options={["Tatami", "Brick", "Diamond"]} />
            </div>
            <div className="mt-2 flex items-center">
                <ValueField id="length" label="Length:" value="3.5 mm" labelWidth="w-[60px]" />
                <span className="w-2" />
                <ValueField id="rnd" label="Rnd:" value="0%" labelWidth="w-[29px]" inputWidth="w-10 text-center" />
            </div>
            <div className="mt-1.5 flex items-center">
                <ValueField id="edge-pad" label="Edge Pad:" value="0.4 mm" labelWidth="w-[60px]" />
            </div>
            <div className="mt-1.5 flex items-center">
                <DropDown id="reverse" label="Reverse:" width="w-[78px]" options={["Pattern", "None"]} />
            </div>
        </div>
    </section>
);

const StatusBar = () => (
    <footer className="flex h-[26px] shrink-0 items-center bg-[#f0f0f0] pr-[38px] pl-[3px] text-base text-[#1a1a1a]">
        <span>Zoom: 65%</span>
        <span className="ml-2.5">Cursor: 6 (1/2)" x 3 (3/16)"</span>
        <span className="mr-[52px] ml-auto">Hoop: 7 (7/8) x 7 (7/8)</span>
        <span className="mr-[62px]">Selected: 5 (1/2)" x 4 (1/2)"</span>
        <span className="mr-5">Stitches:9521</span>
        <span>Ndls/Cols: 3/3</span>
    </footer>
);

const TaskGrip = () => <div className="h-[35px] w-3 bg-[radial-gradient(#1d1118_1px,transparent_2px)] bg-size-[4px_7px]" />;

const Taskbar = () => (
    <div className="relative flex h-[41px] shrink-0 items-center overflow-hidden bg-[#7c5562] text-white">
        <svg className="absolute inset-0 h-full w-full" aria-hidden="true">
            <filter id="carpet" x="0" y="0" width="100%" height="100%" colorInterpolationFilters="sRGB">
                <feTurbulence type="fractalNoise" baseFrequency="0.07 0.1" numOctaves="5" seed="7" />
                <feColorMatrix values="0.7 0 0 0 0.15  0.62 0 0 0 0.05  0.6 0 0 0 0.1  0 0 0 0 1" />
            </filter>
            <filter id="soft"><feGaussianBlur stdDeviation="4" /></filter>
            <rect width="100%" height="100%" filter="url(#carpet)" />
            <path d="M492 -12h122l5 64H490zM806 -12h104l6 64H798z" fill="#5b3849" filter="url(#soft)" />
        </svg>
        <div className="relative flex h-full w-full items-center">
            <button type="button" aria-label="Start" className="flex w-[51px] pl-2">
                <Ico s={34}><path d="M2 6l13-2v12H2zM17 3.700L33 1.500V16H17zM2 18h13v12.500L2 28.500zM17 18h16v15l-16-2.300z" fill="#fff" /></Ico>
            </button>
            <TaskGrip />
            <button type="button" aria-label="Chrome" className="ml-[6px] flex h-10 w-[60px] items-center justify-center border border-white/30 bg-white/20">
                <Ico s={34}><circle cx="17" cy="17" r="16" fill="#fbcd3f" /><path d="M17 17L3 9a16 16 0 0 1 28 0z" fill="#dd4b3e" /><path d="M17 9h14a16 16 0 0 0-28 0l7 12z" fill="#dd4b3e" /><path d="M3 9a16 16 0 0 0 13 24l7-12-13 0z" fill="#2f9e55" /><circle cx="17" cy="17" r="7.500" fill="#fff" /><circle cx="17" cy="17" r="6" fill="#4587f3" /></Ico>
            </button>
            <button type="button" aria-label="File Explorer" className="ml-[15px]">
                <Ico s={36}><path d="M3 3h11l2 3h17v8H3z" fill="#dcc877" /><path d="M5 1h8v4H5zM14 4h8v4h-8zM22 6h8v4h-8z" fill="#fff" /><path d="M6 2h3v2H6z" fill="#2a9c44" /><path d="M16 5h2v2h-2z" fill="#d33" /><path d="M24 7h4v2h-4z" fill="#2f8fe0" /><path d="M1 10h34v21H1z" fill="#f5e294" stroke="#d4b85c" /><path d="M5 34V25q0-3 3-3h20q3 0 3 3v9h-6v-5H11v5z" fill="#8fd3ec" stroke="#4a9fc6" /></Ico>
            </button>
            <button type="button" aria-label="Firefox" className="ml-[26px]">
                <Ico s={34}><circle cx="18" cy="16" r="14" fill="#2466b0" /><path d="M19 3c6 1 11 6 11 12-4-5-8-3-9-7z" fill="#4fb0e6" /><path d="M4 7l4 3c3-2 6-1 8 0-3 1-3 3-3 5-3 6 5 10 11 6 5-3 6-9 4-15 4 4 5 9 4 14-3 12-16 15-24 9C1 24 0 14 4 7z" fill="#e8641b" /><path d="M28 6c4 4 5 9 4 14-2 7-7 11-13 12 8-5 12-13 9-26z" fill="#f9c032" /></Ico>
            </button>
            <button type="button" aria-label="Snipping Tool" className="ml-7">
                <Ico s={34}><ellipse cx="14" cy="18" rx="12" ry="7" fill="#d9b6bb" opacity=".7" transform="rotate(-15 14 18)" /><ellipse cx="15" cy="9" rx="12" ry="7.500" fill="#f4f6f8" stroke="#d8404c" strokeWidth="1.500" transform="rotate(-8 15 9)" /><path d="M9 5l14 18M19 4l-2 19" stroke="#7c8790" strokeWidth="2.500" /><circle cx="28" cy="23" r="4" stroke="#2594dd" strokeWidth="2.500" /><ellipse cx="19" cy="28" rx="3" ry="5" stroke="#2594dd" strokeWidth="2.500" /></Ico>
            </button>
            <button type="button" aria-label="Embrilliance" className="ml-[17px] flex h-10 w-14 items-center justify-center border border-white/70 bg-white/55">
                <Ico s={34}><path d="M0 0h34v34H0z" fill="#fdf532" /><path d="M0 0h34v7H0zM0 28h34v6H0z" fill="#fdfbd0" /><path d="M17 0h3v16l-1 16-2-16z" fill="#222" /><path d="M18 17v9" stroke="#bbb" /></Ico>
            </button>
            <span className="h-10 w-[3px] border-r border-white/50" />
            <div className="ml-auto flex items-center pr-4">
                <TaskGrip />
                <button type="button" aria-label="Touch keyboard" className="ml-[9px]">
                    <svg width="34" height="22" viewBox="0 0 34 22" fill="none"><rect x="1" y="1" width="32" height="20" fill="#2b1b24" stroke="#fff" strokeWidth="2" /><path d="M4 6h26M5 10h24M4 14h26" stroke="#fff" strokeWidth="3" strokeDasharray="3 1" /><path d="M4 18h3M9 18h14M25 18h5" stroke="#fff" strokeWidth="2" /></svg>
                </button>
                <button type="button" aria-label="Show hidden icons" className="ml-[17px]">
                    <Ico s={8}><path d="M0 6l4-4 4 4z" fill="#fff" /></Ico>
                </button>
                <button type="button" aria-label="Volume" className="ml-4">
                    <Ico s={20}><path d="M3 7h3l4-4v14l-4-4H3z" fill="#fff" /><path d="M12 7v6M14 5c2 3 2 7 0 10M17 4c2 3 2 9 0 12" stroke="#fff" /></Ico>
                </button>
                <button type="button" aria-label="Action center" className="ml-[9px]">
                    <Ico s={18}><path d="M3 1v16" stroke="#fff" strokeWidth="2" /><path d="M4 3h6l1 2h6l-3 7h-4l-1-2H4z" fill="#fff" /></Ico>
                </button>
                <button type="button" aria-label="Battery" className="ml-2">
                    <Ico s={20}><rect x="9" y="4" width="8" height="14" stroke="#fff" strokeWidth="2" /><path d="M11 1h4v2h-4z" fill="#fff" /><path d="M2 3v4M5 3v4M1 7h6v4H5v7H3v-7H1z" stroke="#fff" fill="#fff" /></Ico>
                </button>
                <button type="button" aria-label="Network" className="ml-2">
                    <Ico s={18}><path d="M2 14h2v3H2zM5 12h2v5H5zM8 9h2v8H8zM11 6h2v11h-2zM14 3h2v14h-2z" fill="#fff" /></Ico>
                </button>
                <div className="ml-4 text-center text-[14px] leading-[19px]">
                    <div>11:51 AM</div>
                    <div>3/8/2017</div>
                </div>
            </div>
        </div>
    </div>
);

const App = () => (
    <div className="flex h-screen flex-col overflow-hidden bg-[#f0f0f0] font-['Open_Sans','Noto_Sans',sans-serif]">
        <TitleBar />
        <MenuBar />
        <MainToolbar />
        <DrawToolbar />
        <div className="h-[3px] shrink-0 border-b border-[#b9826a] bg-[#f0c9a8]" />
        <main className="flex min-h-0 flex-1">
            <Workspace />
            <aside className="ml-0.5 flex w-[281px] shrink-0 flex-col gap-1">
                <ObjectsPanel />
                <PropertiesPanel />
            </aside>
        </main>
        <div className="h-0.5 shrink-0 bg-[#cfcfcf]" />
        <StatusBar />
        <Taskbar />
    </div>
);

export default App;
